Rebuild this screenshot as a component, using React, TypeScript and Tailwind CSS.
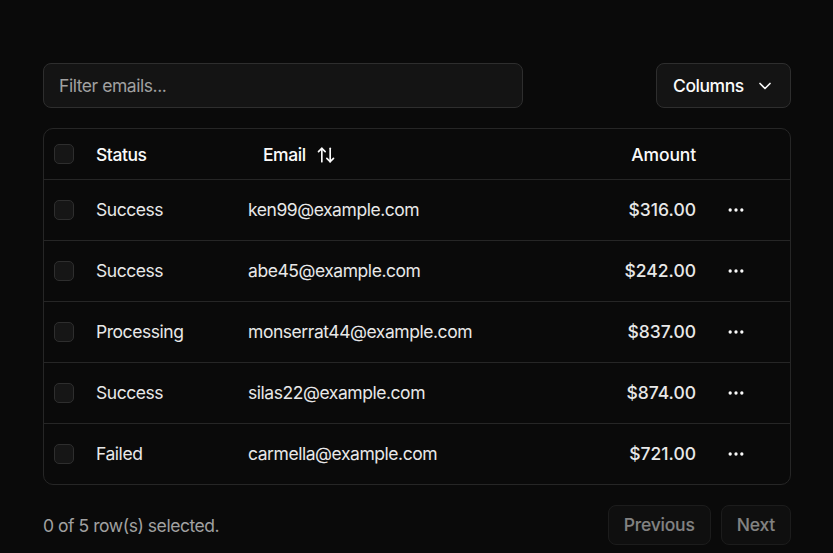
import React from "react";
import { ArrowUpDown, ChevronDown, Ellipsis } from "lucide-react";

const rows = [
  { status: "Success", email: "ken99@example.com", amount: "$316.00" },
  { status: "Success", email: "abe45@example.com", amount: "$242.00" },
  { status: "Processing", email: "monserrat44@example.com", amount: "$837.00" },
  { status: "Success", email: "silas22@example.com", amount: "$874.00" },
  { status: "Failed", email: "carmella@example.com", amount: "$721.00" },
];

function Check() {
  return <div className="w-5 h-5 rounded-[5px] border border-[#2e2e2e] bg-[#161616]" />;
}

export default function App() {
  return (
    <div
      className="min-h-[553px] w-full bg-[#0a0a0a] text-[#fafafa] text-[17.5px] leading-[25px] tracking-[-0.45px]"
      style={{ fontFamily: "Inter, 'Noto Sans', sans-serif" }}
    >
      <div className="ml-[43px] w-[748px] pt-[63px]">
        <div className="flex items-center">
          <div className="h-[45px] w-[480px] rounded-[8px] border border-[#2e2e2e] bg-[#141414] flex items-center px-[15px] text-[#a1a1a1]">
            Filter emails...
          </div>
          <button className="ml-auto h-[45px] w-[135px] rounded-[8px] border border-[#2e2e2e] bg-[#141414] flex items-center pl-[16px] pr-[15px] font-medium">
            <span>Columns</span>
            <ChevronDown className="ml-auto w-5 h-5" strokeWidth={2} />
          </button>
        </div>
        <div className="mt-[20px] rounded-[10px] border border-[#262626] overflow-hidden">
          <table className="w-full border-collapse">
            <thead>
              <tr className="border-b border-[#262626] h-[50px]">
                <th className="w-[40px] pl-[10px] pr-[10px] align-middle">
                  <Check />
                </th>
                <th className="w-[154px] pl-[12px] pr-[8px] pt-[2px] text-left font-medium">Status</th>
                <th className="px-[10px] pt-[2px] text-left font-medium">
                  <span className="inline-flex items-center gap-[10px] px-[15px]">
                    Email
                    <ArrowUpDown className="w-5 h-5" strokeWidth={2} />
                  </span>
                </th>
                <th className="w-[140px] px-[10px] pt-[2px] text-right font-medium tracking-[-0.15px]">Amount</th>
                <th className="w-[84px]"></th>
              </tr>
            </thead>
            <tbody className="text-[#e8e8e8]">
              {rows.map((r, i) => (
                <tr key={i} className={i < rows.length - 1 ? "border-b border-[#262626]" : ""}>
                  <td className="pl-[10px] pr-[10px] py-[10px] align-middle">
                    <Check />
                  </td>
                  <td className="pl-[12px] pr-[8px] pt-[10px] pb-[10px]">{r.status}</td>
                  <td className="px-[10px] pt-[10px] pb-[10px]">{r.email}</td>
                  <td className="px-[10px] pt-[10px] pb-[10px] text-right font-medium tracking-[0px]">{r.amount}</td>
                  <td className="pl-[10px] py-[10px]">
                    <div className="w-[40px] h-[40px] flex items-center justify-center text-[#fafafa]">
                      <Ellipsis className="w-5 h-5" strokeWidth={2} />
                    </div>
                  </td>
                </tr>
              ))}
            </tbody>
          </table>
        </div>
        <div className="flex items-center py-[20px]">
          <div className="text-[#a1a1a1] pt-[2px]">0 of 5 row(s) selected.</div>
          <div className="ml-auto flex gap-[10px]">
            <button className="h-[40px] px-[15px] rounded-[8px] border border-[#2e2e2e] bg-[#141414] font-medium opacity-50 tracking-[-0.2px]">
              Previous
            </button>
            <button className="h-[40px] px-[15px] rounded-[8px] border border-[#2e2e2e] bg-[#141414] font-medium opacity-50 tracking-[-0.2px]">
              Next
            </button>
          </div>
        </div>
      </div>
    </div>
  );
}
